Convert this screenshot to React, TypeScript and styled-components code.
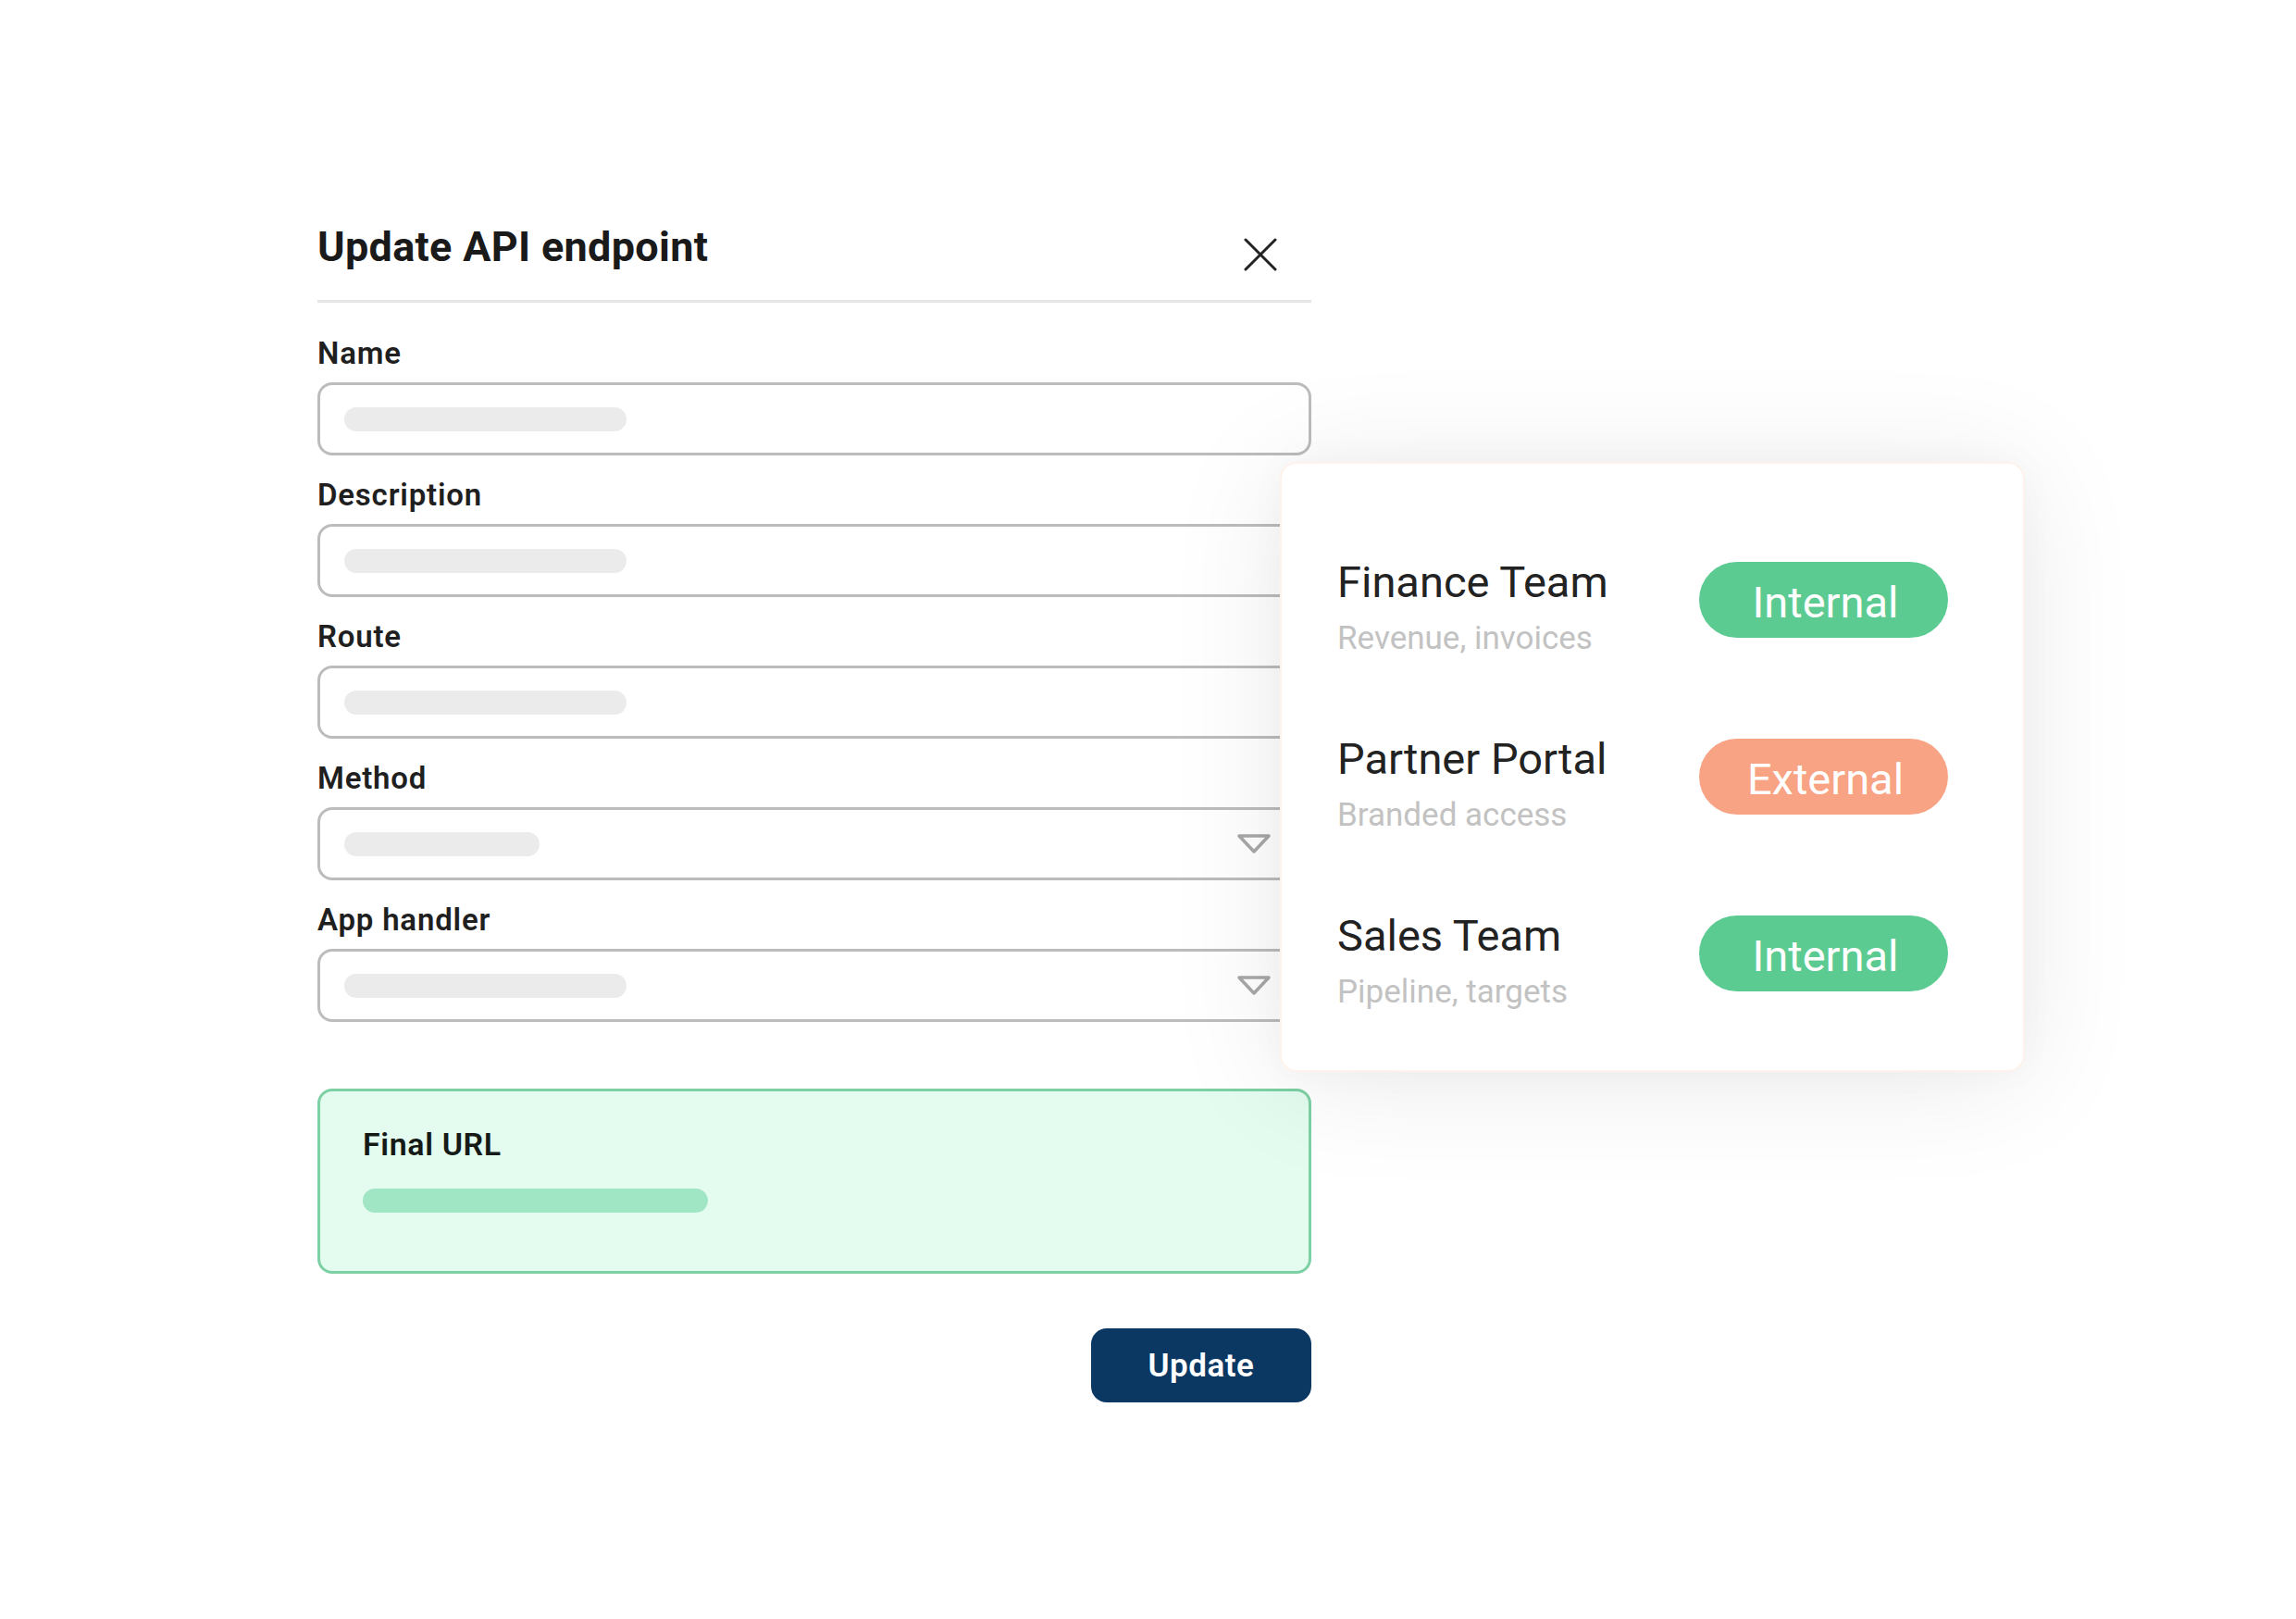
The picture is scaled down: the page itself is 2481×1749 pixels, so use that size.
import styled, {createGlobalStyle} from "styled-components";

const GlobalStyle = createGlobalStyle`
  html, body {
    margin: 0;
    background: #ffffff;
    font-family: Roboto, "Liberation Sans", Arial, sans-serif;
  }
`;

type Field = {label: string; bar: number; select?: boolean};

const fields: Field[] = [
    {label: "Name", bar: 305},
    {label: "Description", bar: 305},
    {label: "Route", bar: 305},
    {label: "Method", bar: 211, select: true},
    {label: "App handler", bar: 305, select: true},
];

type Team = {name: string; info: string; kind: "Internal" | "External"};

const teams: Team[] = [
    {name: "Finance Team", info: "Revenue, invoices", kind: "Internal"},
    {name: "Partner Portal", info: "Branded access", kind: "External"},
    {name: "Sales Team", info: "Pipeline, targets", kind: "Internal"},
];

export default function App() {
    return (
        <>
            <GlobalStyle />
            <Page>
                <Stage>
                    <Form>
                        <Header>
                            <Title>Update API endpoint</Title>
                            <CloseButton aria-label="Close">
                                <svg width="36" height="36" viewBox="0 0 36 36">
                                    <path d="M2 2L34 34M34 2L2 34" stroke="#222" strokeWidth="3" strokeLinecap="round" />
                                </svg>
                            </CloseButton>
                        </Header>

                        <Fields>
                            {fields.map((f) => (
                                <FieldBlock key={f.label}>
                                    <Label>{f.label}</Label>
                                    <InputBox>
                                        <Placeholder $width={f.bar} />
                                        {f.select && (
                                            <svg width="38" height="23" viewBox="0 0 38 23">
                                                <path d="M3 3H35L19 20Z" fill="none" stroke="#a8a8a8" strokeWidth="3.5" strokeLinejoin="round" />
                                            </svg>
                                        )}
                                    </InputBox>
                                </FieldBlock>
                            ))}
                        </Fields>

                        <UrlBox>
                            <UrlTitle>Final URL</UrlTitle>
                            <UrlBar />
                        </UrlBox>

                        <Actions>
                            <UpdateButton>Update</UpdateButton>
                        </Actions>
                    </Form>

                    <TeamCard>
                        {teams.map((t) => (
                            <TeamRow key={t.name}>
                                <TeamText>
                                    <TeamName>{t.name}</TeamName>
                                    <TeamInfo>{t.info}</TeamInfo>
                                </TeamText>
                                <Badge $kind={t.kind}>{t.kind}</Badge>
                            </TeamRow>
                        ))}
                    </TeamCard>
                </Stage>
            </Page>
        </>
    );
}

const Page = styled.div`
  min-height: 1749px;
  padding: 241px 0 0 343px;
  box-sizing: border-box;
`;

const Stage = styled.div`
  position: relative;
  width: 1074px;
`;

const Form = styled.div`
  display: flex;
  flex-direction: column;
`;

const Header = styled.div`
  display: flex;
  align-items: flex-end;
  justify-content: space-between;
  padding-bottom: 31px;
  border-bottom: 3px solid #e6e6e6;
`;

const Title = styled.h1`
  margin: 0;
  font-size: 45px;
  line-height: 52px;
  font-weight: 700;
  letter-spacing: 0.3px;
  color: #1a1a1a;
`;

const CloseButton = styled.button`
  display: flex;
  border: none;
  background: none;
  padding: 0;
  margin: 0 37px 0 0;
  cursor: pointer;
`;

const Fields = styled.div`
  display: flex;
  flex-direction: column;
  gap: 25px;
  margin-top: 37px;
`;

const FieldBlock = styled.div`
  display: flex;
  flex-direction: column;
  gap: 13px;
`;

const Label = styled.label`
  font-size: 33px;
  line-height: 36px;
  font-weight: 600;
  letter-spacing: 0.8px;
  color: #1f1f1f;
`;

const InputBox = styled.div`
  display: flex;
  align-items: center;
  justify-content: space-between;
  height: 79px;
  box-sizing: border-box;
  padding: 0 40px 0 26px;
  border: 3px solid #bcbcbc;
  border-radius: 16px;
  background: #ffffff;
`;

const Placeholder = styled.div<{$width: number}>`
  width: ${(p) => p.$width}px;
  height: 26px;
  border-radius: 13px;
  background: #ebebeb;
`;

const UrlBox = styled.div`
  display: flex;
  flex-direction: column;
  gap: 28px;
  margin-top: 72px;
  height: 200px;
  box-sizing: border-box;
  padding: 37px 46px 0;
  border: 3px solid #7dd0a4;
  border-radius: 16px;
  background: #e3fcef;
`;

const UrlTitle = styled.div`
  font-size: 34px;
  line-height: 40px;
  font-weight: 600;
  letter-spacing: 0.6px;
  color: #151a17;
`;

const UrlBar = styled.div`
  width: 373px;
  height: 26px;
  border-radius: 13px;
  background: #a1e6c4;
`;

const Actions = styled.div`
  display: flex;
  justify-content: flex-end;
  margin-top: 59px;
`;

const UpdateButton = styled.button`
  width: 238px;
  height: 80px;
  border: none;
  border-radius: 17px;
  background: #0b3763;
  color: #ffffff;
  font-family: Roboto, "Liberation Sans", Arial, sans-serif;
  font-size: 35px;
  font-weight: 600;
  letter-spacing: 0.5px;
  cursor: pointer;
`;

const TeamCard = styled.div`
  position: absolute;
  left: 1040px;
  top: 258px;
  width: 805px;
  height: 659px;
  box-sizing: border-box;
  padding: 100px 81px 0 60px;
  display: flex;
  flex-direction: column;
  gap: 81px;
  background: #ffffff;
  border-radius: 18px;
  border: 2px solid #fdf3ec;
  box-shadow: 0 10px 130px rgba(0, 0, 0, 0.085), 0 0 40px rgba(0, 0, 0, 0.03);
`;

const TeamRow = styled.div`
  display: flex;
  align-items: flex-start;
  justify-content: space-between;
`;

const TeamText = styled.div`
  display: flex;
  flex-direction: column;
  gap: 12px;
`;

const TeamName = styled.div`
  font-size: 47px;
  line-height: 56px;
  color: #222222;
`;

const TeamInfo = styled.div`
  font-size: 35px;
  line-height: 42px;
  color: #c2c2c2;
`;

const Badge = styled.div<{$kind: "Internal" | "External"}>`
  display: flex;
  align-items: center;
  justify-content: center;
  margin-top: 6px;
  width: 269px;
  height: 82px;
  border-radius: 41px;
  background: ${(p) => (p.$kind === "Internal" ? "#5ccb92" : "#f9a385")};
  color: #ffffff;
  font-size: 47px;
  padding: 4px 0 0 4px;
  box-sizing: border-box;
`;
